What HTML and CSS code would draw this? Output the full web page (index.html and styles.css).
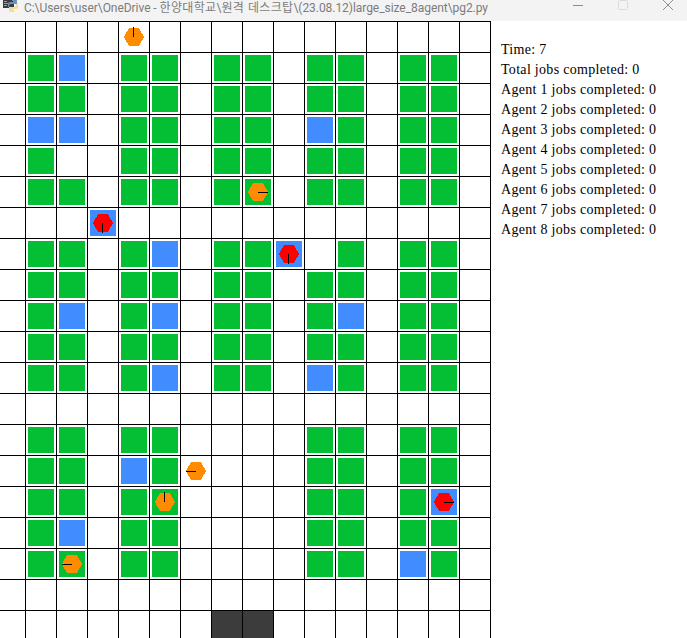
FILE: index.html
```html
<!DOCTYPE html>
<html lang="ko">
<head>
<meta charset="utf-8">
<title>pg2.py</title>
<link rel="stylesheet" href="styles.css">
</head>
<body>
<div class="window">
  <header class="titlebar">
    <svg class="app-icon" width="16" height="16" viewBox="0 0 16 16">
      <rect x="0" y="0" width="11" height="11" fill="#3b3a3c"/>
      <rect x="1" y="4" width="3" height="1" fill="#5fbf6a"/>
      <rect x="1" y="6" width="4" height="1" fill="#5fbf6a"/>
      <rect x="1" y="8" width="3" height="1" fill="#5fbf6a"/>
      <path d="M9 2h3a2 2 0 0 1 2 2v3H8a2 2 0 0 0-2 2v1H5V7a2 2 0 0 1 2-2h3V4H9z" fill="#6d8fb5"/>
      <path d="M14 6h1v4a2 2 0 0 1-2 2h-3v1h1v2H8a2 2 0 0 1-2-2v-3h5a2 2 0 0 0 2-2z" fill="#f1dc9a"/>
    </svg>
    <span class="title-text">C:\Users\user\OneDrive - <span class="ko">한양대학교</span>\<span class="ko">원격 데스크탑</span>\(23.08.12)large_size_8agent\pg2.py</span>
    <div class="controls">
      <svg class="ctl" width="10" height="10" viewBox="0 0 10 10"><rect x="0" y="5" width="10" height="1" fill="#8d8d8d"/></svg>
      <svg class="ctl" width="10" height="10" viewBox="0 0 10 10"><rect x="0.5" y="0.5" width="9" height="9" rx="1" fill="none" stroke="#dcdcd4"/></svg>
      <svg class="ctl" width="10" height="10" viewBox="0 0 10 10"><path d="M0 0l10 10M10 0l-10 10" stroke="#8d8d8d" fill="none"/></svg>
    </div>
  </header>
  <main class="content">
    <div class="board">
      <!-- row 0 -->
      <div class="c"></div><div class="c"></div><div class="c"></div><div class="c"></div><div class="c"><svg class="agent" viewBox="0 0 30 30"><polygon class="hex-o" points="5,15 10,6 20,6 25,15 20,24 10,24"/><rect x="14" y="5" width="1" height="10"/></svg></div><div class="c"></div><div class="c"></div><div class="c"></div><div class="c"></div><div class="c"></div><div class="c"></div><div class="c"></div><div class="c"></div><div class="c"></div><div class="c"></div><div class="c"></div>
      <!-- row 1 -->
      <div class="c"></div><div class="c g"></div><div class="c b"></div><div class="c"></div><div class="c g"></div><div class="c g"></div><div class="c"></div><div class="c g"></div><div class="c g"></div><div class="c"></div><div class="c g"></div><div class="c g"></div><div class="c"></div><div class="c g"></div><div class="c g"></div><div class="c"></div>
      <!-- row 2 -->
      <div class="c"></div><div class="c g"></div><div class="c g"></div><div class="c"></div><div class="c g"></div><div class="c g"></div><div class="c"></div><div class="c g"></div><div class="c g"></div><div class="c"></div><div class="c g"></div><div class="c g"></div><div class="c"></div><div class="c g"></div><div class="c g"></div><div class="c"></div>
      <!-- row 3 -->
      <div class="c"></div><div class="c b"></div><div class="c b"></div><div class="c"></div><div class="c g"></div><div class="c g"></div><div class="c"></div><div class="c g"></div><div class="c g"></div><div class="c"></div><div class="c b"></div><div class="c g"></div><div class="c"></div><div class="c g"></div><div class="c g"></div><div class="c"></div>
      <!-- row 4 -->
      <div class="c"></div><div class="c g"></div><div class="c"></div><div class="c"></div><div class="c g"></div><div class="c g"></div><div class="c"></div><div class="c g"></div><div class="c g"></div><div class="c"></div><div class="c g"></div><div class="c g"></div><div class="c"></div><div class="c g"></div><div class="c g"></div><div class="c"></div>
      <!-- row 5 -->
      <div class="c"></div><div class="c g"></div><div class="c g"></div><div class="c"></div><div class="c g"></div><div class="c g"></div><div class="c"></div><div class="c g"></div><div class="c g"><svg class="agent" viewBox="0 0 30 30"><polygon class="hex-o" points="5,15 10,6 20,6 25,15 20,24 10,24"/><rect x="15" y="15" width="10" height="1"/></svg></div><div class="c"></div><div class="c g"></div><div class="c g"></div><div class="c"></div><div class="c g"></div><div class="c g"></div><div class="c"></div>
      <!-- row 6 -->
      <div class="c"></div><div class="c"></div><div class="c"></div><div class="c b"><svg class="agent" viewBox="0 0 30 30"><polygon class="hex-r" points="5,15 10,6 20,6 25,15 20,24 10,24"/><rect x="14" y="15" width="1" height="10"/></svg></div><div class="c"></div><div class="c"></div><div class="c"></div><div class="c"></div><div class="c"></div><div class="c"></div><div class="c"></div><div class="c"></div><div class="c"></div><div class="c"></div><div class="c"></div><div class="c"></div>
      <!-- row 7 -->
      <div class="c"></div><div class="c g"></div><div class="c g"></div><div class="c"></div><div class="c g"></div><div class="c b"></div><div class="c"></div><div class="c g"></div><div class="c g"></div><div class="c b"><svg class="agent" viewBox="0 0 30 30"><polygon class="hex-r" points="5,15 10,6 20,6 25,15 20,24 10,24"/><rect x="14" y="15" width="1" height="10"/></svg></div><div class="c"></div><div class="c g"></div><div class="c"></div><div class="c g"></div><div class="c g"></div><div class="c"></div>
      <!-- row 8 -->
      <div class="c"></div><div class="c g"></div><div class="c g"></div><div class="c"></div><div class="c g"></div><div class="c g"></div><div class="c"></div><div class="c g"></div><div class="c g"></div><div class="c"></div><div class="c g"></div><div class="c g"></div><div class="c"></div><div class="c g"></div><div class="c g"></div><div class="c"></div>
      <!-- row 9 -->
      <div class="c"></div><div class="c g"></div><div class="c b"></div><div class="c"></div><div class="c g"></div><div class="c b"></div><div class="c"></div><div class="c g"></div><div class="c g"></div><div class="c"></div><div class="c g"></div><div class="c b"></div><div class="c"></div><div class="c g"></div><div class="c g"></div><div class="c"></div>
      <!-- row 10 -->
      <div class="c"></div><div class="c g"></div><div class="c g"></div><div class="c"></div><div class="c g"></div><div class="c g"></div><div class="c"></div><div class="c g"></div><div class="c g"></div><div class="c"></div><div class="c g"></div><div class="c g"></div><div class="c"></div><div class="c g"></div><div class="c g"></div><div class="c"></div>
      <!-- row 11 -->
      <div class="c"></div><div class="c g"></div><div class="c g"></div><div class="c"></div><div class="c g"></div><div class="c b"></div><div class="c"></div><div class="c g"></div><div class="c g"></div><div class="c"></div><div class="c b"></div><div class="c g"></div><div class="c"></div><div class="c g"></div><div class="c g"></div><div class="c"></div>
      <!-- row 12 -->
      <div class="c"></div><div class="c"></div><div class="c"></div><div class="c"></div><div class="c"></div><div class="c"></div><div class="c"></div><div class="c"></div><div class="c"></div><div class="c"></div><div class="c"></div><div class="c"></div><div class="c"></div><div class="c"></div><div class="c"></div><div class="c"></div>
      <!-- row 13 -->
      <div class="c"></div><div class="c g"></div><div class="c g"></div><div class="c"></div><div class="c g"></div><div class="c g"></div><div class="c"></div><div class="c"></div><div class="c"></div><div class="c"></div><div class="c g"></div><div class="c g"></div><div class="c"></div><div class="c g"></div><div class="c g"></div><div class="c"></div>
      <!-- row 14 -->
      <div class="c"></div><div class="c g"></div><div class="c g"></div><div class="c"></div><div class="c b"></div><div class="c g"></div><div class="c"><svg class="agent" viewBox="0 0 30 30"><polygon class="hex-o" points="5,15 10,6 20,6 25,15 20,24 10,24"/><rect x="5" y="15" width="10" height="1"/></svg></div><div class="c"></div><div class="c"></div><div class="c"></div><div class="c g"></div><div class="c g"></div><div class="c"></div><div class="c g"></div><div class="c g"></div><div class="c"></div>
      <!-- row 15 -->
      <div class="c"></div><div class="c g"></div><div class="c g"></div><div class="c"></div><div class="c g"></div><div class="c g"><svg class="agent" viewBox="0 0 30 30"><polygon class="hex-o" points="5,15 10,6 20,6 25,15 20,24 10,24"/><rect x="14" y="5" width="1" height="10"/></svg></div><div class="c"></div><div class="c"></div><div class="c"></div><div class="c"></div><div class="c g"></div><div class="c g"></div><div class="c"></div><div class="c g"></div><div class="c b"><svg class="agent" viewBox="0 0 30 30"><polygon class="hex-r" points="5,15 10,6 20,6 25,15 20,24 10,24"/><rect x="15" y="15" width="10" height="1"/></svg></div><div class="c"></div>
      <!-- row 16 -->
      <div class="c"></div><div class="c g"></div><div class="c b"></div><div class="c"></div><div class="c g"></div><div class="c g"></div><div class="c"></div><div class="c"></div><div class="c"></div><div class="c"></div><div class="c g"></div><div class="c g"></div><div class="c"></div><div class="c g"></div><div class="c g"></div><div class="c"></div>
      <!-- row 17 -->
      <div class="c"></div><div class="c g"></div><div class="c g"><svg class="agent" viewBox="0 0 30 30"><polygon class="hex-o" points="5,15 10,6 20,6 25,15 20,24 10,24"/><rect x="5" y="15" width="10" height="1"/></svg></div><div class="c"></div><div class="c g"></div><div class="c g"></div><div class="c"></div><div class="c"></div><div class="c"></div><div class="c"></div><div class="c g"></div><div class="c g"></div><div class="c"></div><div class="c b"></div><div class="c g"></div><div class="c"></div>
      <!-- row 18 -->
      <div class="c"></div><div class="c"></div><div class="c"></div><div class="c"></div><div class="c"></div><div class="c"></div><div class="c"></div><div class="c"></div><div class="c"></div><div class="c"></div><div class="c"></div><div class="c"></div><div class="c"></div><div class="c"></div><div class="c"></div><div class="c"></div>
      <!-- row 19 -->
      <div class="c"></div><div class="c"></div><div class="c"></div><div class="c"></div><div class="c"></div><div class="c"></div><div class="c"></div><div class="c d"></div><div class="c d"></div><div class="c"></div><div class="c"></div><div class="c"></div><div class="c"></div><div class="c"></div><div class="c"></div><div class="c"></div>
    </div>
    <aside class="stats">
      <p>Time: 7</p>
      <p>Total jobs completed: 0</p>
      <p>Agent 1 jobs completed: 0</p>
      <p>Agent 2 jobs completed: 0</p>
      <p>Agent 3 jobs completed: 0</p>
      <p>Agent 4 jobs completed: 0</p>
      <p>Agent 5 jobs completed: 0</p>
      <p>Agent 6 jobs completed: 0</p>
      <p>Agent 7 jobs completed: 0</p>
      <p>Agent 8 jobs completed: 0</p>
    </aside>
  </main>
</div>
</body>
</html>
```
FILE: styles.css
```css
html, body {
  margin: 0;
  padding: 0;
  background: #fff;
}
.window {
  width: 687px;
  height: 638px;
  overflow: hidden;
  display: flex;
  flex-direction: column;
}
.titlebar {
  height: 21px;
  flex: none;
  background: #f3f3f3;
  display: flex;
  align-items: flex-start;
  padding-left: 3px;
}
.app-icon {
  flex: none;
  margin-top: -3px;
}
.title-text {
  margin-left: 5px;
  font: 12px/14px Roboto, "Noto Sans CJK KR", sans-serif;
  letter-spacing: -0.05px;
  color: #7c7c7c;
  white-space: nowrap;
}
.ko {
  font-family: "Noto Sans CJK KR", sans-serif;
  line-height: 14px;
  letter-spacing: 0.35px;
}
.controls {
  margin-left: auto;
  display: flex;
  gap: 35px;
  padding-right: 14px;
}
.content {
  flex: 1;
  display: flex;
  min-height: 0;
}
.board {
  flex: none;
  width: 491px;
  display: grid;
  grid-template-columns: 26px repeat(15, 31px);
  grid-auto-rows: 31px;
  border-top: 1px solid #000;
  box-sizing: border-box;
}
.c {
  box-sizing: border-box;
  border-right: 1px solid #000;
  border-bottom: 1px solid #000;
  padding: 2px;
  position: relative;
}
.g { background: #04be34 content-box; }
.b { background: #418cff content-box; }
.d { background: #3c3c3c; }
.agent {
  position: absolute;
  left: 0;
  top: 0;
  width: 30px;
  height: 30px;
  shape-rendering: crispEdges;
}
.hex-o { fill: #ff8c00; }
.hex-r { fill: #ff0000; }
.stats {
  padding: 19px 0 0 10px;
  font: 14px/20px "Liberation Serif", serif;
  letter-spacing: 0.3px;
  color: #000;
  white-space: nowrap;
}
.stats p {
  margin: 0;
}
```
